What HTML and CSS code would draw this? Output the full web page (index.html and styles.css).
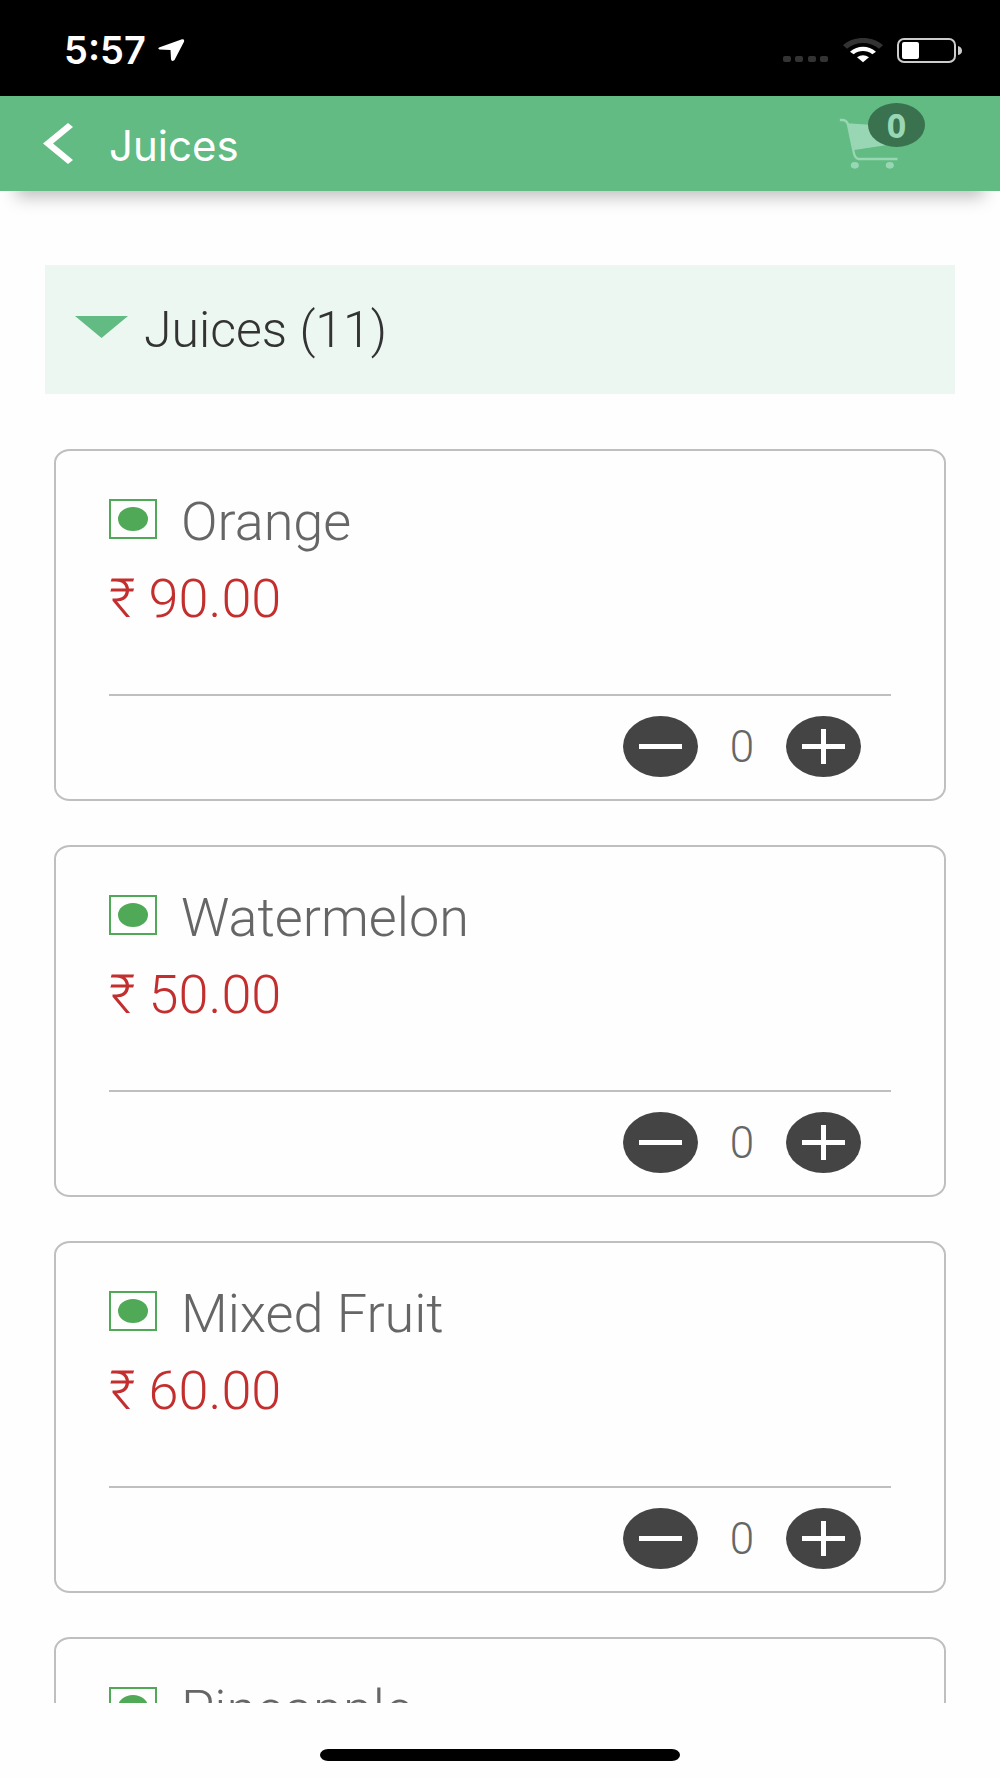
FILE: index.html
```html
<!DOCTYPE html>
<html lang="en">

<head>
    <meta charset="utf-8">
    <meta name="viewport" content="width=device-width,initial-scale=1">
    <title>Juices</title>
    <link rel="stylesheet" href="styles.css">
</head>

<body>
    <div class="status-bar">
        <span class="time">5:57</span>
        <svg class="location" width="27" height="23" viewBox="0 0 27 23" fill="#fff">
            <path d="M1 8.500L24 .3Q26.800 0 26 2.700L16.500 21Q13.500 23.500 13 20L12.500 11L1.500 10.500Q-.5 9.600 1 8.500z" />
        </svg>
        <div class="indicators">
            <svg width="46" height="25" viewBox="0 0 46 25" fill="#333">
                <rect x="0" y="18" width="8" height="6" rx="2" />
                <rect x="12" y="18" width="8" height="6" rx="2" />
                <rect x="25" y="18" width="8" height="6" rx="2" />
                <rect x="37" y="18" width="8" height="6" rx="2" />
            </svg>
            <svg width="40" height="25" viewBox="0 0 120 75">
                <path d="M0 22C32-7 88-7 120 22L108 32C82 9 38 9 12 32z" fill="#333" />
                <path d="M21 41C44 21 76 21 99 41L88 49C72 36 48 36 32 49z" fill="#fff" />
                <path d="M42 58Q60 45 78 58L60 73z" fill="#fff" />
            </svg>
            <svg width="66" height="25" viewBox="0 0 66 25">
                <rect x="1" y="1" width="57" height="23" rx="6" fill="none" stroke="#ccc" stroke-width="2" />
                <rect x="5" y="4" width="17" height="17" rx="2" fill="#fff" />
                <path d="M61 8Q65 9 65 13Q65 16 61 17z" fill="#ccc" />
            </svg>
        </div>
    </div>

    <header class="navbar">
        <button class="back" type="button" aria-label="Back">
            <svg width="30" height="41" viewBox="0 0 30 41" fill="#fff">
                <path d="M25 0L30 4L10 20.500L30 37L25 41L0 20.500z" />
            </svg>
        </button>
        <h1>Juices</h1>
        <a class="cart" href="#cart" aria-label="Cart">
            <svg width="59" height="51" viewBox="0 0 176 153" fill="#99d6b3">
                <path d="M24 16L150 24L150 80L45 96z" />
                <path d="M2 6H12Q22 7 26 18L44 104Q48 123 60 123H175" fill="none" stroke="#99d6b3" stroke-width="7" />
                <ellipse cx="47" cy="142" rx="12" ry="10" />
                <ellipse cx="152" cy="142" rx="12" ry="10" />
            </svg>
            <span class="badge">0</span>
        </a>
    </header>

    <main>
        <button class="category" type="button" aria-expanded="true">
            <svg width="53" height="28" viewBox="0 0 53 28" fill="#61bb82">
                <path d="M0 0H53L26.500 22z" />
            </svg>
            Juices (11)
        </button>

        <section class="items">
            <article class="item">
                <h2><span class="veg"></span>Orange</h2>
                <p class="price">₹ 90.00</p>
                <div class="actions">
                    <button class="qty-btn minus" type="button" aria-label="Remove Orange"></button>
                    <output>0</output>
                    <button class="qty-btn plus" type="button" aria-label="Add Orange"></button>
                </div>
            </article>

            <article class="item">
                <h2><span class="veg"></span>Watermelon</h2>
                <p class="price">₹ 50.00</p>
                <div class="actions">
                    <button class="qty-btn minus" type="button" aria-label="Remove Watermelon"></button>
                    <output>0</output>
                    <button class="qty-btn plus" type="button" aria-label="Add Watermelon"></button>
                </div>
            </article>

            <article class="item">
                <h2><span class="veg"></span>Mixed Fruit</h2>
                <p class="price">₹ 60.00</p>
                <div class="actions">
                    <button class="qty-btn minus" type="button" aria-label="Remove Mixed Fruit"></button>
                    <output>0</output>
                    <button class="qty-btn plus" type="button" aria-label="Add Mixed Fruit"></button>
                </div>
            </article>

            <article class="item">
                <h2><span class="veg"></span>Pineapple</h2>
            </article>
        </section>
    </main>

    <footer class="home">
        <div class="home-indicator"></div>
    </footer>
</body>

</html>
```

FILE: styles.css
```css
* {
    box-sizing: border-box;
}

body {
    display: flex;
    flex-direction: column;
    height: 100vh;
    margin: 0;
    background: #fefefe;
    color: #666;
    font-family: Roboto, "Liberation Sans", sans-serif;
    font-weight: 300;
}

h1,
h2,
p {
    margin: 0;
    font-weight: inherit;
}

button {
    padding: 0;
    border: 0;
    background: none;
    color: inherit;
    font: inherit;
    cursor: pointer;
}

svg {
    display: block;
    flex: none;
}

/* phone status bar */
.status-bar {
    display: flex;
    align-items: center;
    flex: none;
    height: 96px;
    padding: 4px 37px 0 64px;
    background: #000;
    color: #fff;
}

.time {
    font-family: Inter, sans-serif;
    font-size: 38px;
    font-weight: 600;
}

.location {
    margin-left: 12px;
}

.indicators {
    display: flex;
    gap: 14px;
    margin-left: auto;
}

/* top navigation */
.navbar {
    display: flex;
    align-items: center;
    flex: none;
    height: 95px;
    padding: 0 102px 0 43px;
    background: #61bb82;
    box-shadow: 0 22px 16px -16px rgba(0, 0, 0, 0.25);
    color: #fff;
}

.navbar h1 {
    padding-top: 3px;
    margin-left: 36px;
    font-family: Inter, sans-serif;
    font-size: 42px;
    font-weight: 400;
}

.cart {
    position: relative;
    margin-left: auto;
}

.badge {
    position: absolute;
    top: -15px;
    left: 29px;
    width: 57px;
    height: 44px;
    border-radius: 50%;
    background: #3a714e;
    color: #99d6b3;
    font-family: "Open Sans", sans-serif;
    font-size: 34px;
    font-weight: 700;
    line-height: 44px;
    text-align: center;
}

/* list */
main {
    flex: 1;
    min-height: 0;
    padding: 74px 45px 0;
    overflow: hidden;
}

.category {
    display: flex;
    align-items: center;
    gap: 16px;
    width: 100%;
    height: 129px;
    padding: 0 30px;
    background: #edf7f2;
    color: #333;
    font-size: 50px;
}

.items {
    display: grid;
    gap: 44px;
    padding: 55px 9px;
}

.item {
    padding: 32px 53px 22px;
    border: 2px solid #bfbfbf;
    border-radius: 16px / 14px;
}

.item h2 {
    display: flex;
    align-items: center;
    gap: 24px;
    font-size: 54px;
    line-height: 78px;
}

/* green dot in a box, marks vegetarian food */
.veg {
    display: grid;
    place-items: center;
    width: 48px;
    height: 40px;
    margin-bottom: 6px;
    border: 2px solid #4fa956;
}

.veg::before {
    width: 30px;
    height: 24px;
    border-radius: 50%;
    background: #4fa956;
    content: "";
}

.price {
    color: #c22f2e;
    font-size: 54px;
    line-height: 76px;
}

.actions {
    display: flex;
    justify-content: flex-end;
    align-items: center;
    margin-top: 57px;
    padding: 20px 30px 0;
    border-top: 2px solid #bfbfbf;
}

.actions output {
    width: 88px;
    font-size: 44px;
    line-height: 60px;
    text-align: center;
}

.qty-btn {
    width: 75px;
    height: 61px;
    border-radius: 50%;
    background-color: #444;
    background-position: center;
    background-repeat: no-repeat;
}

.minus {
    background-image: linear-gradient(#fff, #fff);
    background-size: 43px 5px;
}

.plus {
    background-image: linear-gradient(#fff, #fff), linear-gradient(#fff, #fff);
    background-size: 43px 5px, 5px 35px;
}

.home {
    flex: none;
    height: 75px;
    padding-top: 46px;
}

.home-indicator {
    width: 36%;
    height: 12px;
    margin: 0 auto;
    border-radius: 8px / 6px;
    background: #000;
}
```
